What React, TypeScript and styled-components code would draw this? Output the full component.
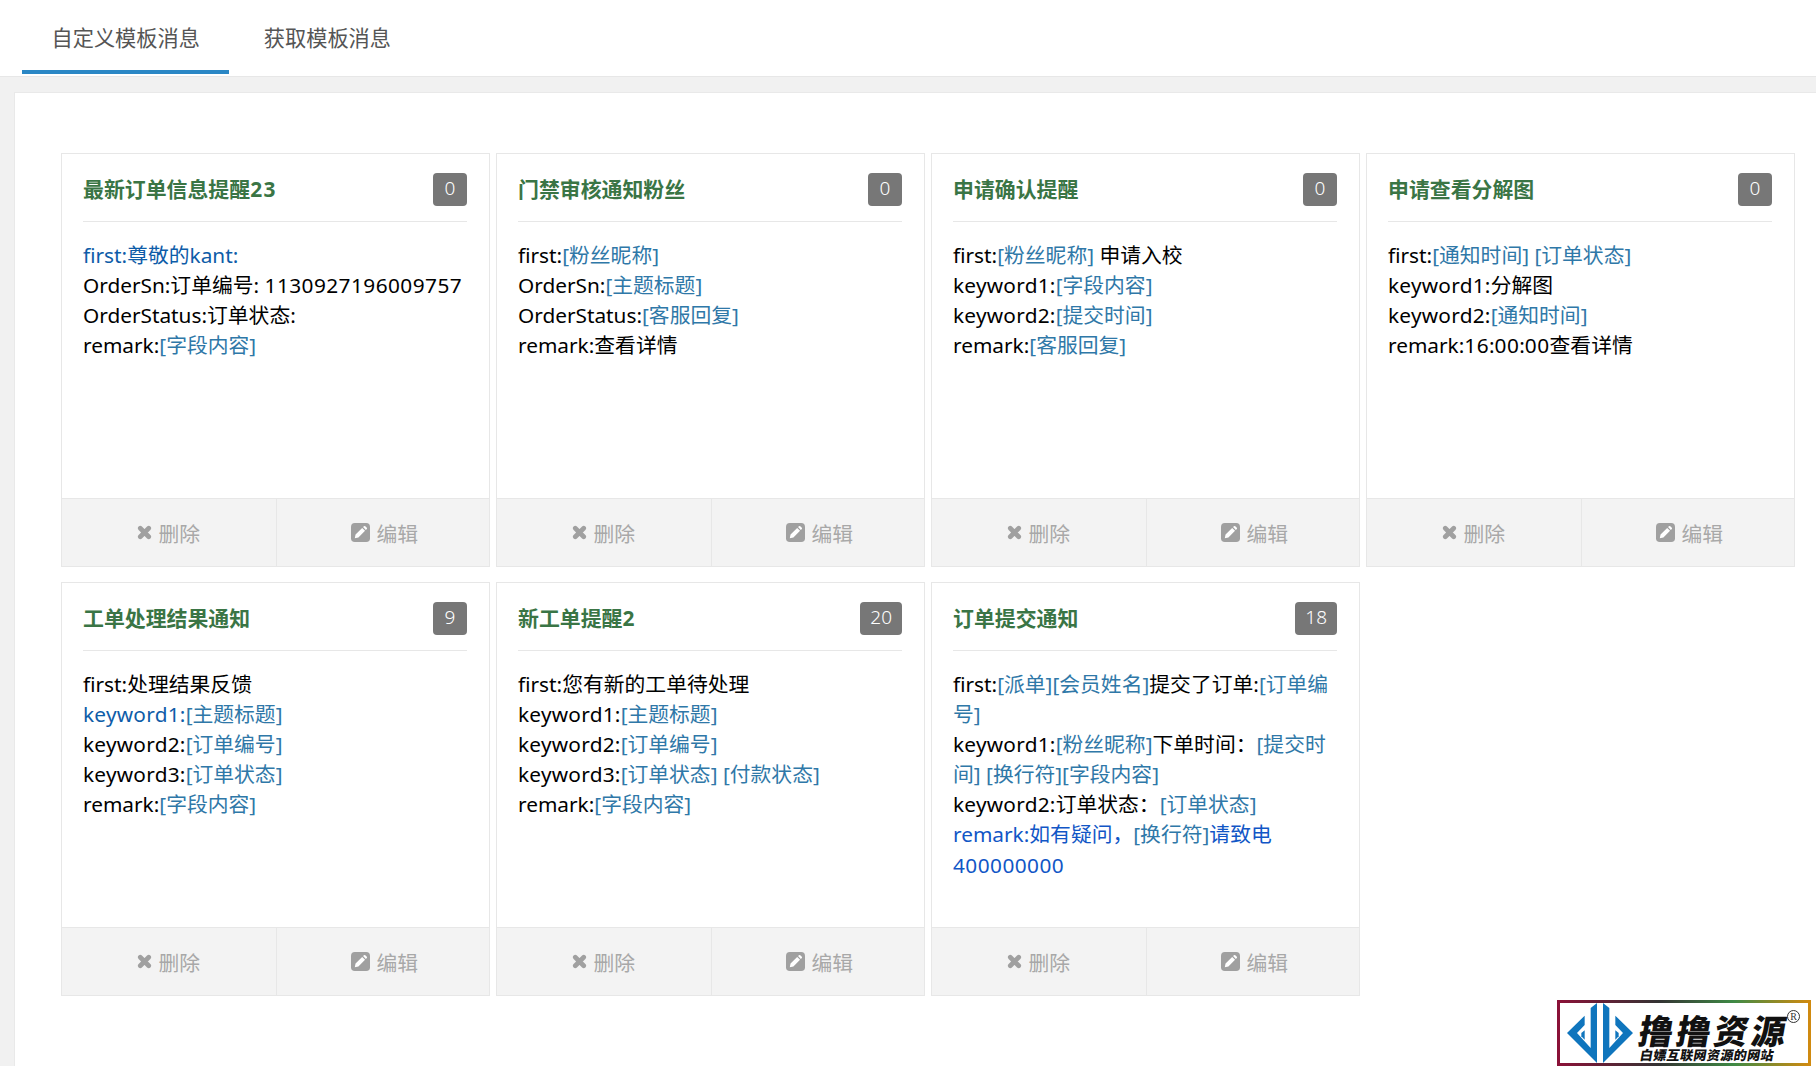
import React from "react";
import styled, { createGlobalStyle } from "styled-components";

const GlobalStyle = createGlobalStyle`
  html, body { margin: 0; padding: 0; background: #f1f1f1; }
  body {
    font-family: "Noto Sans", "Noto Sans CJK SC", sans-serif;
    width: 1816px; height: 1066px; overflow: hidden; position: relative;
  }
  * { box-sizing: border-box; }
`;

const TabBar = styled.nav`
  height: 77px; background: #fff; border-bottom: 1px solid #e7e7e7;
  padding-left: 22px; display: flex; gap: 5px;
`;
const Tab = styled.div<{ $active?: boolean }>`
  height: 74px; padding: 3px 29.5px 0; display: flex; align-items: center;
  font-size: 21.2px; color: #555;
  border-bottom: 4px solid ${(p) => (p.$active ? "#2a87c5" : "transparent")};
`;
const Panel = styled.main`
  margin: 15px 0 0 14px; width: 1840px; height: 1000px; background: #fff;
  border: 1px solid #e9e9e9; padding: 60px 0 0 46px;
`;
const CardGrid = styled.div`
  display: grid; grid-template-columns: repeat(4, 429px);
  column-gap: 6px; row-gap: 15px;
`;
const Card = styled.article`
  height: 414px; border: 1px solid #e7e7e7; background: #fff;
  display: flex; flex-direction: column;
`;
const CardHead = styled.header`
  margin: 0 22px 0 21px; height: 68px; padding-top: 19px;
  border-bottom: 1px solid #e7e7e7; display: flex; justify-content: space-between; align-items: flex-start;
`;
const CardTitle = styled.h3`
  margin: 0; font-size: 20.9px; font-weight: 700; color: #3a7545; line-height: 33px;
`;
const TitleDigits = styled.span`
  letter-spacing: 1.3px;
`;
const Badge = styled.span`
  min-width: 34px; height: 33px; padding: 0 10px; background: #777; color: #fff;
  border-radius: 4px; font-size: 19px; font-weight: 300; text-align: center; line-height: 31px;
`;
const CardBody = styled.div`
  flex: 1; padding: 18px 22px 0 21px; font-size: 20.8px; line-height: 30.1px; color: #000;
`;
const Line = styled.div<{ $tone?: string }>`
  color: ${(p) => p.$tone || "#000"};
`;
const Tag = styled.span`
  color: #2f78a8;
`;
const Digits = styled.span`
  letter-spacing: 0.45px;
`;
const Keyword = styled.span`
  letter-spacing: 0.25px;
`;
const CardFoot = styled.footer`
  height: 68px; background: #f3f3f3; border-top: 1px solid #e7e7e7;
  display: grid; grid-template-columns: 1fr 1fr;
`;
const FootBtn = styled.div`
  display: flex; align-items: center; justify-content: center; gap: 6px;
  color: #a8a8a8; font-size: 20.8px;
  & + & { border-left: 1px solid #e7e7e7; padding-left: 4px; }
`;
const RemoveIcon = styled.svg`
  width: 15px; height: 15px; flex: none;
`;
const EditIcon = styled.svg`
  width: 19px; height: 19px; flex: none;
`;
const Logo = styled.div`
  position: absolute; left: 1557px; top: 1000px; width: 254px; height: 66px;
  background: #fff; border: 3px solid; display: flex; align-items: center;
  border-image: linear-gradient(to right, #8a1238, #333 40%, #3f8a45 70%, #d08a10) 1;
`;
const LogoMark = styled.svg`
  width: 66px; height: 60px; margin-left: 7px; flex: none;
`;
const LogoWords = styled.div`
  margin-left: 6px; padding-top: 7px; position: relative; transform: skewX(-10deg);
  font-family: "Noto Sans CJK SC", sans-serif; color: #111;
`;
const LogoName = styled.div`
  font-size: 34px; font-weight: 900; line-height: 40px; letter-spacing: 3.6px; white-space: nowrap;
`;
const LogoSub = styled.div`
  font-size: 13px; font-weight: 900; line-height: 16px; letter-spacing: 0.4px; white-space: nowrap; margin: -3px 0 0 5px;
`;
const LogoR = styled.span`
  position: absolute; right: 8px; top: 7px; color: #333;
  border: 1px solid #333; border-radius: 50%; width: 13px; height: 13px;
  line-height: 12px; font-size: 10px; text-align: center; font-family: "Liberation Serif", serif;
`;

type Piece = string | { t: string };
type L = { tone?: string; parts: Piece[] };
const tag = (t: string) => ({ t });
const BLUE = "#0e5ca8";
const BLUE2 = "#1156c6";

const cards: { title: string; count: number; lines: L[] }[] = [
  { title: "最新订单信息提醒23", count: 0, lines: [
    { tone: BLUE, parts: ["first:尊敬的kant:"] },
    { parts: ["OrderSn:订单编号: 1130927196009757"] },
    { parts: ["OrderStatus:订单状态:"] },
    { parts: ["remark:", tag("[字段内容]")] },
  ] },
  { title: "门禁审核通知粉丝", count: 0, lines: [
    { parts: ["first:", tag("[粉丝昵称]")] },
    { parts: ["OrderSn:", tag("[主题标题]")] },
    { parts: ["OrderStatus:", tag("[客服回复]")] },
    { parts: ["remark:查看详情"] },
  ] },
  { title: "申请确认提醒", count: 0, lines: [
    { parts: ["first:", tag("[粉丝昵称]"), " 申请入校"] },
    { parts: ["keyword1:", tag("[字段内容]")] },
    { parts: ["keyword2:", tag("[提交时间]")] },
    { parts: ["remark:", tag("[客服回复]")] },
  ] },
  { title: "申请查看分解图", count: 0, lines: [
    { parts: ["first:", tag("[通知时间] [订单状态]")] },
    { parts: ["keyword1:分解图"] },
    { parts: ["keyword2:", tag("[通知时间]")] },
    { parts: ["remark:16:00:00查看详情"] },
  ] },
  { title: "工单处理结果通知", count: 9, lines: [
    { parts: ["first:处理结果反馈"] },
    { tone: BLUE, parts: ["keyword1:", tag("[主题标题]")] },
    { parts: ["keyword2:", tag("[订单编号]")] },
    { parts: ["keyword3:", tag("[订单状态]")] },
    { parts: ["remark:", tag("[字段内容]")] },
  ] },
  { title: "新工单提醒2", count: 20, lines: [
    { parts: ["first:您有新的工单待处理"] },
    { parts: ["keyword1:", tag("[主题标题]")] },
    { parts: ["keyword2:", tag("[订单编号]")] },
    { parts: ["keyword3:", tag("[订单状态] [付款状态]")] },
    { parts: ["remark:", tag("[字段内容]")] },
  ] },
  { title: "订单提交通知", count: 18, lines: [
    { parts: ["first:", tag("[派单][会员姓名]"), "提交了订单:", tag("[订单编号]")] },
    { parts: ["keyword1:", tag("[粉丝昵称]"), "下单时间：", tag("[提交时间] [换行符][字段内容]")] },
    { parts: ["keyword2:订单状态：", tag("[订单状态]")] },
    { tone: BLUE2, parts: ["remark:如有疑问，", tag("[换行符]"), "请致电 400000000"] },
  ] },
];

function renderText(s: string) {
  return s.split(/(keyword\d:|\d+)/).map((seg, i) => {
    if (/^keyword/.test(seg)) return <Keyword key={i}>{seg}</Keyword>;
    if (/^\d+$/.test(seg)) return <Digits key={i}>{seg}</Digits>;
    return <React.Fragment key={i}>{seg}</React.Fragment>;
  });
}

function renderTitle(s: string) {
  return s.split(/(\d+)/).map((seg, i) =>
    /^\d+$/.test(seg) ? <TitleDigits key={i}>{seg}</TitleDigits> : <React.Fragment key={i}>{seg}</React.Fragment>
  );
}

export default function App() {
  return (
    <>
      <GlobalStyle />
      <TabBar>
        <Tab $active>自定义模板消息</Tab>
        <Tab>获取模板消息</Tab>
      </TabBar>
      <Panel>
        <CardGrid>
          {cards.map((c) => (
            <Card key={c.title}>
              <CardHead>
                <CardTitle>{renderTitle(c.title)}</CardTitle>
                <Badge>{c.count}</Badge>
              </CardHead>
              <CardBody>
                {c.lines.map((l, i) => (
                  <Line key={i} $tone={l.tone}>
                    {l.parts.map((p, j) =>
                      typeof p === "string" ? <React.Fragment key={j}>{renderText(p)}</React.Fragment> : <Tag key={j}>{p.t}</Tag>
                    )}
                  </Line>
                ))}
              </CardBody>
              <CardFoot>
                <FootBtn>
                  <RemoveIcon viewBox="0 0 16 16">
                    <path d="M3.5 3.5 L12.5 12.5 M12.5 3.5 L3.5 12.5" stroke="#a0a0a0" strokeWidth="5" strokeLinecap="round" fill="none" />
                  </RemoveIcon>
                  删除
                </FootBtn>
                <FootBtn>
                  <EditIcon viewBox="0 0 18 18">
                    <rect width="18" height="18" rx="3.6" fill="#a0a0a0" />
                    <path d="M3.6 14.4 L4.3 11 L10.6 4.7 L13.3 7.4 L7 13.7 Z M11.4 3.9 L12.3 3 Q12.9 2.6 13.5 3 L15 4.5 Q15.4 5.1 15 5.7 L14.1 6.6 Z" fill="#fff" />
                  </EditIcon>
                  编辑
                </FootBtn>
              </CardFoot>
            </Card>
          ))}
        </CardGrid>
      </Panel>
      <Logo>
        <LogoMark viewBox="22 10 198 180">
          <path fill="#0f75bd" d="M75 48 L22 100 L112 190 L112 10 L93 25 L93 145 L52 100 L75 76 Z" />
          <path fill="#0f75bd" d="M65 110 L75 120 L75 92 L65 100 Z" />
          <path fill="#0f75bd" d="M167 48 L220 100 L130 190 L130 10 L149 25 L149 145 L190 100 L167 76 Z" />
          <path fill="#0f75bd" d="M177 110 L167 120 L167 92 L177 100 Z" />
        </LogoMark>
        <LogoWords>
          <LogoName>撸撸资源</LogoName>
          <LogoSub>白嫖互联网资源的网站</LogoSub>
        </LogoWords>
        <LogoR>R</LogoR>
      </Logo>
    </>
  );
}
